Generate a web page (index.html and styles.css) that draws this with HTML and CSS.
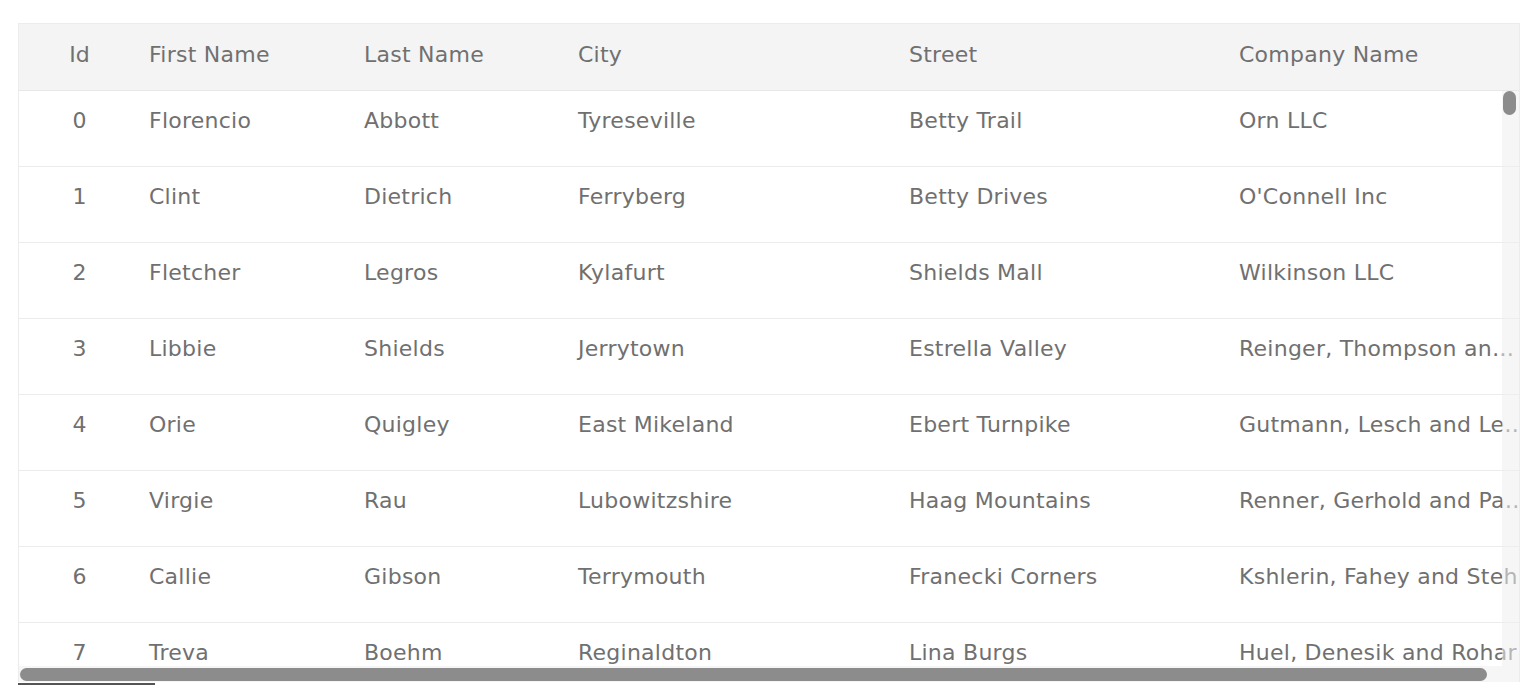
FILE: index.html
```html
<!DOCTYPE html>
<html lang="en">
<head>
<meta charset="utf-8">
<title>Table</title>
<link rel="stylesheet" href="styles.css">
</head>
<body>
<div class="table">
  <div class="thead row">
    <div class="cell id">Id</div>
    <div class="cell">First Name</div>
    <div class="cell">Last Name</div>
    <div class="cell">City</div>
    <div class="cell">Street</div>
    <div class="cell">Company Name</div>
  </div>
  <div class="tbody">
    <div class="row">
      <div class="cell id">0</div><div class="cell">Florencio</div><div class="cell">Abbott</div><div class="cell">Tyreseville</div><div class="cell">Betty Trail</div><div class="cell">Orn LLC</div>
    </div>
    <div class="row">
      <div class="cell id">1</div><div class="cell">Clint</div><div class="cell">Dietrich</div><div class="cell">Ferryberg</div><div class="cell">Betty Drives</div><div class="cell">O'Connell Inc</div>
    </div>
    <div class="row">
      <div class="cell id">2</div><div class="cell">Fletcher</div><div class="cell">Legros</div><div class="cell">Kylafurt</div><div class="cell">Shields Mall</div><div class="cell">Wilkinson LLC</div>
    </div>
    <div class="row">
      <div class="cell id">3</div><div class="cell">Libbie</div><div class="cell">Shields</div><div class="cell">Jerrytown</div><div class="cell">Estrella Valley</div><div class="cell">Reinger, Thompson and Gleichner</div>
    </div>
    <div class="row">
      <div class="cell id">4</div><div class="cell">Orie</div><div class="cell">Quigley</div><div class="cell">East Mikeland</div><div class="cell">Ebert Turnpike</div><div class="cell">Gutmann, Lesch and Legros</div>
    </div>
    <div class="row">
      <div class="cell id">5</div><div class="cell">Virgie</div><div class="cell">Rau</div><div class="cell">Lubowitzshire</div><div class="cell">Haag Mountains</div><div class="cell">Renner, Gerhold and Parisian</div>
    </div>
    <div class="row">
      <div class="cell id">6</div><div class="cell">Callie</div><div class="cell">Gibson</div><div class="cell">Terrymouth</div><div class="cell">Franecki Corners</div><div class="cell">Kshlerin, Fahey and Stehr</div>
    </div>
    <div class="row">
      <div class="cell id">7</div><div class="cell">Treva</div><div class="cell">Boehm</div><div class="cell">Reginaldton</div><div class="cell">Lina Burgs</div><div class="cell">Huel, Denesik and Rohar</div>
    </div>
    <div class="vscroll"><div class="vthumb"></div></div>
    <div class="hscroll"><div class="hthumb"></div></div>
  </div>
</div>
<div class="pager-line"></div>
</body>
</html>
```

FILE: styles.css
```css
html, body {
  margin: 0;
  padding: 0;
  background: #ffffff;
}
body {
  padding: 23px 0 0 18px;
  font-family: "DejaVu Sans", "Noto Sans", sans-serif;
  font-size: 22px;
  color: #707070;
}
.table {
  width: 1500px;
  border-left: 1px solid #ececec;
  border-top: 1px solid #ececec;
  border-right: 1px solid #ececec;
  overflow: hidden;
}
.row {
  display: grid;
  grid-template-columns: 111px 215px 214px 331px 330px 308px;
  width: 1509px;
  height: 76px;
  border-bottom: 1px solid #ececec;
  box-sizing: border-box;
}
.thead {
  height: 67px;
  background: #f4f4f4;
  border-bottom: 1px solid #e8e8e8;
}
.cell {
  padding: 15px 0 0 19px;
  line-height: 30px;
  white-space: nowrap;
  overflow: hidden;
  text-overflow: ellipsis;
  letter-spacing: 0.25px;
}
.thead .cell {
  padding-top: 16px;
}
.cell.id {
  padding-left: 10px;
  text-align: center;
  letter-spacing: 0;
}
.tbody {
  position: relative;
  height: 591px;
  overflow: hidden;
}
.vscroll {
  position: absolute;
  top: 0;
  right: 0;
  width: 17px;
  bottom: 0;
  background: rgba(238, 238, 238, 0.55);
}
.vthumb {
  margin: 0 0 0 1px;
  width: 13px;
  height: 24px;
  border-radius: 7px;
  background: #8c8c8c;
}
.hscroll {
  position: absolute;
  left: 0;
  right: 17px;
  bottom: 0;
  height: 16px;
  background: rgba(238, 238, 238, 0.55);
}
.hthumb {
  margin: 2px 0 0 1px;
  width: 1467px;
  height: 13px;
  border-radius: 7px;
  background: #8c8c8c;
}
.pager-line {
  margin-top: 1px;
  width: 137px;
  height: 2px;
  background: #555555;
}
```
